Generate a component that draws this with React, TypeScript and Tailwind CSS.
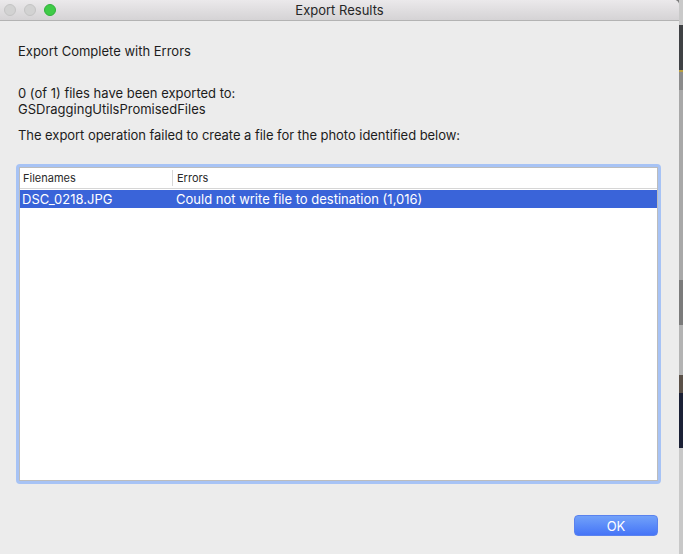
export default function App() {
  const font = { fontFamily: 'Inter, "Liberation Sans", Arial, sans-serif' }

  return (
    <div className="flex w-[683px] h-[554px] bg-[#7d7d7d]" style={font}>
      {/* dialog window */}
      <div className="flex flex-col w-[679px] h-full bg-[#ececec] rounded-tr-[5px] overflow-hidden">
        {/* title bar */}
        <div className="relative flex items-center justify-center h-[21px] shrink-0 bg-gradient-to-b from-[#ebe9eb] to-[#d5d3d5] border-b border-[#b3b3b3]">
          <div className="absolute left-[4px] top-[4px] flex gap-[8px]">
            <span className="w-[12px] h-[12px] rounded-full bg-[#d2d2d2] border border-[#c4c4c4]"></span>
            <span className="w-[12px] h-[12px] rounded-full bg-[#d2d2d2] border border-[#c4c4c4]"></span>
            <span className="w-[12px] h-[12px] rounded-full bg-[#3fcb47] border border-[#2fb13a]"></span>
          </div>
          <span className="text-[13px] leading-[16px] text-[#262626]">Export Results</span>
        </div>

        {/* content */}
        <div className="flex flex-col flex-1 px-[18px] pt-[22px] text-[13px] leading-[16px] text-[#1c1c1c]">
          <p>Export Complete with Errors</p>
          <p className="mt-[26px]">0 (of 1) files have been exported to:</p>
          <p>GSDraggingUtilsPromisedFiles</p>
          <p className="mt-[10px] tracking-[-0.05px]">The export operation failed to create a file for the photo identified below:</p>

          {/* results table */}
          <div className="mt-[21px] -ml-[2px] w-[645px] h-[320px] rounded-[4px] border-[3px] border-[#a7c3f5]">
            <div className="w-full h-full bg-white border border-[#bcbcbc]">
              <div className="flex items-center h-[21px] border-b border-[#d6d6d6] text-[11px] text-[#2a2a2a]">
                <div className="w-[152px] pl-[3px]">Filenames</div>
                <div className="w-px h-[16px] bg-[#d8d8d8]"></div>
                <div className="pl-[4px]">Errors</div>
              </div>
              <div className="flex items-center h-[18px] mt-[1px] bg-[#3a64d9] text-white text-[13px]">
                <div className="w-[153px] pl-[2px]">DSC_0218.JPG</div>
                <div className="pl-[3px]">Could not write file to destination (1,016)</div>
              </div>
            </div>
          </div>

          {/* actions */}
          <div className="flex justify-end mt-[31px] mr-[3px]">
            <button className="w-[84px] h-[21px] rounded-[4px] bg-gradient-to-b from-[#72a1f9] to-[#4674f7] border border-[#5a82ee] text-white text-[13px] leading-[16px]">
              OK
            </button>
          </div>
        </div>
      </div>

      {/* desktop peeking through on the right */}
      <div className="flex flex-col flex-1">
        <div className="h-[25px] bg-[#c9c9c9]"></div>
        <div className="h-[45px] bg-[#3f4144]"></div>
        <div className="h-[2px] bg-[#b9a040]"></div>
        <div className="h-[18px] bg-[#8b8b8b]"></div>
        <div className="h-[190px] bg-[#a8a8a8]"></div>
        <div className="h-[45px] bg-[#7b7b7b]"></div>
        <div className="h-[50px] bg-[#b3b3b3]"></div>
        <div className="h-[18px] bg-[#5a5048]"></div>
        <div className="h-[55px] bg-[#1b2035]"></div>
        <div className="flex-1 bg-[#c8c8c8]"></div>
      </div>
    </div>
  )
}
